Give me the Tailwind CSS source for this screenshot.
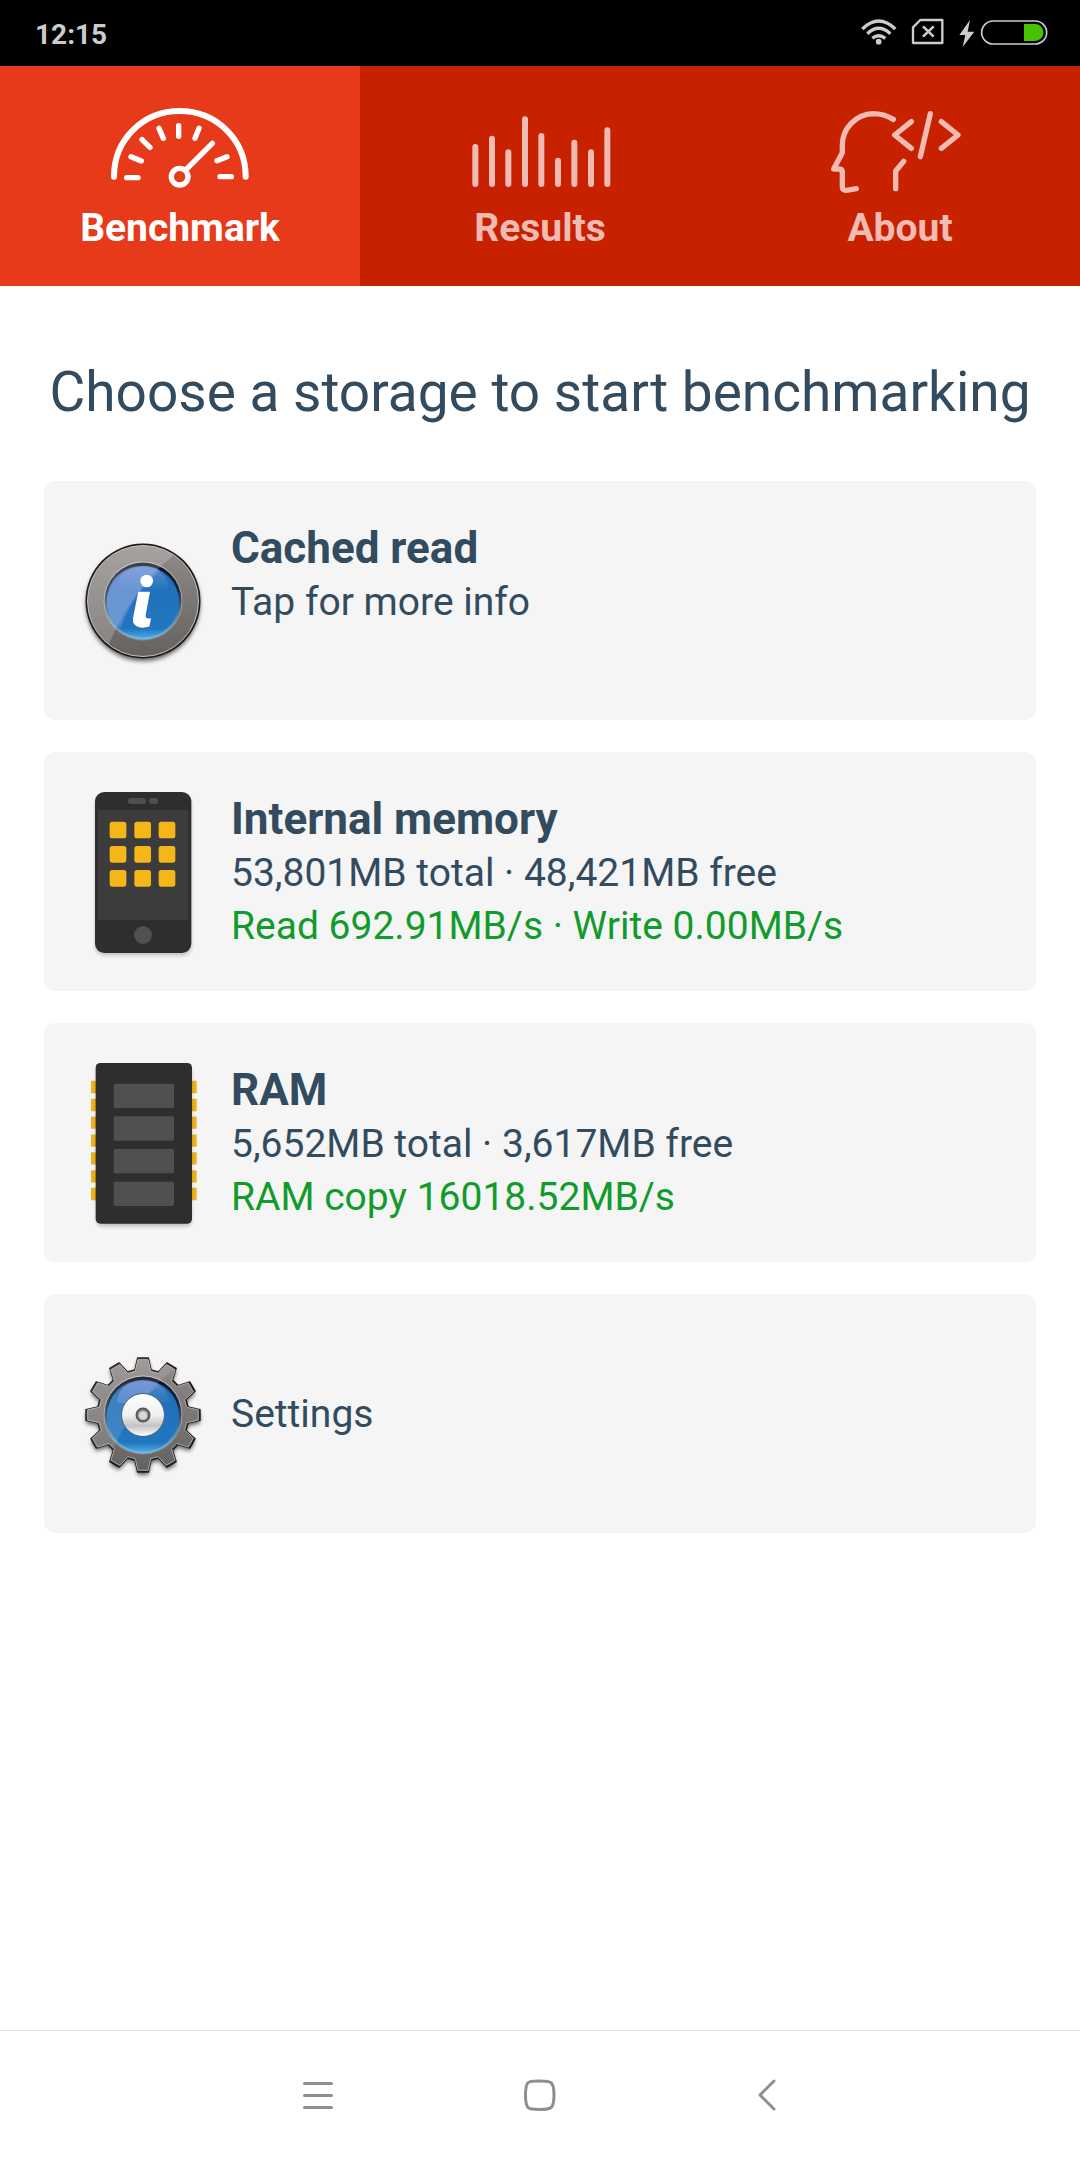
<!DOCTYPE html>
<html lang="en">
<head>
<meta charset="utf-8">
<meta name="viewport" content="width=device-width, initial-scale=1">
<title>Storage benchmark</title>
<script src="https://cdn.jsdelivr.net/npm/@tailwindcss/browser@4"></script>
</head>
<body class="flex min-h-screen flex-col bg-white font-[Roboto,sans-serif] text-[#334b5f]">

<!-- Status bar -->
<div class="flex h-[66px] items-center justify-between bg-black pr-8 pl-[35px]">
  <span class="pt-1 text-[28px] leading-8 font-bold text-[#cccccc]">12:15</span>
  <div class="flex items-center pb-0.5">
    <svg class="mr-[14px] h-8 w-9" viewBox="65 48 108 96" fill="none" stroke="#ccc" stroke-width="10" aria-hidden="true">
      <path d="M69 87Q118 39 168 87M84 101Q118 69 153 101M99 115Q118 99 138 115"/>
      <circle cx="118" cy="125" r="8.500" fill="#ccc" stroke="none"/>
    </svg>
    <svg class="mr-[14px] h-8 w-[33px]" viewBox="214 48 99 96" fill="none" stroke="#ccc" aria-hidden="true">
      <path stroke-width="7" stroke-linejoin="round" d="M242 60H308V129H220V82Z"/>
      <path stroke-width="8" d="M250 79 282 110M282 79 250 110"/>
    </svg>
    <svg class="mr-1 h-8 w-[18px]" viewBox="355 48 54 96" fill="#ccc" aria-hidden="true">
      <path d="M391 60 359 105H377L369 141 404 95H384Z"/>
    </svg>
    <svg class="h-8 w-[68px]" viewBox="421 48 204 96" aria-hidden="true">
      <rect x="426" y="63" width="195" height="69" rx="34.500" fill="none" stroke="#ccc" stroke-width="5"/>
      <path d="M553 72H586A25.500 25.500 0 0 1 586 123H553Z" fill="#46c203"/>
    </svg>
  </div>
</div>

<!-- Tabs -->
<nav class="grid h-[220px] grid-cols-3 bg-[#c82100] text-[39px] leading-[46px] font-bold text-[#f1bab3]">
  <a href="#benchmark" aria-current="page" class="flex flex-col items-center gap-2 bg-[#e73a1a] pt-[35px] text-white">
    <svg class="h-24 w-[150px]" viewBox="135 63 450 288" fill="none" stroke="currentColor" stroke-width="16" stroke-linecap="round" aria-hidden="true">
      <path stroke-width="18" d="M162 290C162 176 252 93 359 93S557 176 557 290"/>
      <path d="M200 293H234M213 230 244 243M246 179 270 202M297 145 310 175M356 137V169M417 145 405 175M501 230 471 242M480 290H514M457 190 378 269"/>
      <circle cx="359" cy="290" r="25"/>
    </svg>
    <span>Benchmark</span>
  </a>
  <a href="#results" class="flex flex-col items-center gap-2 pt-[35px]">
    <svg class="h-24 w-[150px]" viewBox="75 63 450 288" fill="none" stroke="currentColor" stroke-width="18" stroke-linecap="round" aria-hidden="true">
      <path d="M106 201V312M156 176V312M205 217V312M255 118V312M304 168V312M354 242V312M403 188V312M453 217V312M502 151V312"/>
    </svg>
    <span>Results</span>
  </a>
  <a href="#about" class="flex flex-col items-center gap-2 pt-[35px]">
    <svg class="h-24 w-[150px]" viewBox="75 63 450 288" fill="none" stroke="currentColor" stroke-width="16" stroke-linecap="round" stroke-linejoin="round" aria-hidden="true">
      <path d="M280 118C253 102 236 101 220 101C167 103 127 145 127 195V218L101 267H117Q127 267 127 277V320Q127 332 139 331L169 326M311 244 287 273V326"/>
      <path d="M334 125 284 165 334 205M391 101 361 230M424 125 474 165 424 205"/>
    </svg>
    <span>About</span>
  </a>
</nav>

<main class="flex grow flex-col px-11 pt-[74px]">
  <h1 class="text-center text-[55px] leading-[64px] whitespace-nowrap">Choose a storage to start benchmarking</h1>

  <div class="mt-[57px] flex flex-col gap-8 text-[39px] leading-[53px]">
    <!-- Cached read -->
    <button type="button" class="flex h-[239px] items-center gap-2 rounded-[11px] bg-[#f5f5f5] pl-[19px] text-left">
      <svg class="h-[180px] w-[160px] shrink-0" viewBox="-80 -90 160 180" aria-hidden="true">
        <defs>
          <linearGradient id="steel" gradientUnits="userSpaceOnUse" x1="0" y1="-57" x2="0" y2="57">
            <stop offset="0" stop-color="#918c89"/><stop offset="1" stop-color="#65615f"/>
          </linearGradient>
          <linearGradient id="blue" gradientUnits="userSpaceOnUse" x1="0" y1="-37" x2="0" y2="39">
            <stop offset="0" stop-color="#2b68b8"/><stop offset=".3" stop-color="#2070bb"/><stop offset=".85" stop-color="#2276c0"/><stop offset="1" stop-color="#55b5e8"/>
          </linearGradient>
          <linearGradient id="shine" gradientUnits="userSpaceOnUse" x1="0" y1="-36" x2="0" y2="-10">
            <stop offset="0" stop-color="#fff" stop-opacity=".25"/><stop offset="1" stop-color="#fff" stop-opacity="0"/>
          </linearGradient>
          <linearGradient id="rim" gradientUnits="userSpaceOnUse" x1="0" y1="-39" x2="0" y2="39">
            <stop offset="0" stop-color="#080b12"/><stop offset=".35" stop-color="#17283c"/><stop offset=".7" stop-color="#4a87ac"/><stop offset="1" stop-color="#6fc0e8"/>
          </linearGradient>
          <linearGradient id="bevel" gradientUnits="userSpaceOnUse" x1="0" y1="-40" x2="0" y2="40">
            <stop offset="0" stop-color="#c0bdba"/><stop offset="1" stop-color="#8d8784"/>
          </linearGradient>
          <filter id="soft" x="-30%" y="-30%" width="160%" height="160%"><feGaussianBlur stdDeviation="2"/></filter>
          <filter id="softer" x="-30%" y="-30%" width="160%" height="160%"><feGaussianBlur stdDeviation="6"/></filter>
          <clipPath id="disc"><circle r="55"/></clipPath>
        </defs>
        <circle cy="3" r="57" fill="#000" opacity=".6" filter="url(#soft)"/>
        <circle r="57.500" fill="#1c1c1c"/>
        <circle r="55.500" fill="url(#steel)" stroke="#c3c0be" stroke-width="1"/>
        <circle r="39.500" fill="url(#bevel)"/>
        <circle r="38.500" fill="url(#rim)"/>
        <circle cy=".8" r="36" fill="url(#blue)"/>
        <path d="M-26-13C-24-29-12-34 0-34S24-29 26-13Q0-6-26-13Z" fill="url(#shine)"/>
        <path d="M30-45Q-10-14-34 43L-60 60V-60H30Z" fill="#fff" opacity=".2" clip-path="url(#disc)"/>
        <path d="M-36 3C-37-22-20-35 0-35 8-35 13-33 17-30Q-8-10-23 27Q-34 18-36 3Z" fill="#8f9fe0" opacity=".45"/>
        <circle cx="3.700" cy="-20" r="6.300" fill="#fff"/>
        <path d="M-4.700-9.300H7L2.500 15Q2.500 18 8 17.300L6.500 25.500Q2 27 -3 26.500Q-11 25 -10 17Z" fill="#fff"/>
      </svg>
      <span class="flex min-h-[162px] flex-col">
        <strong class="text-[44px] leading-[56px] font-bold">Cached read</strong>
        <span>Tap for more info</span>
      </span>
    </button>

    <!-- Internal memory -->
    <button type="button" class="flex h-[239px] items-center gap-2 rounded-[11px] bg-[#f5f5f5] pl-[19px] text-left">
      <svg class="h-[180px] w-[160px] shrink-0" viewBox="-21 33 480 540" aria-hidden="true">
        <rect x="77" y="76" width="286" height="476" rx="26" fill="#000" opacity=".25" filter="url(#softer)"/>
        <rect x="75" y="63" width="289" height="483" rx="28" fill="#2e2e2e"/>
        <path d="M84 117H355V447H84Z" fill="#3c3c3c"/>
        <rect x="174" y="81" width="54" height="18" rx="8" fill="#4f4f4f"/>
        <rect x="237" y="81" width="27" height="18" rx="8" fill="#4f4f4f"/>
        <circle cx="219" cy="492" r="27" fill="#505050"/>
        <g fill="#f5b619">
          <rect x="119" y="152" width="50" height="50" rx="8"/><rect x="193" y="152" width="50" height="50" rx="8"/><rect x="266" y="152" width="50" height="50" rx="8"/>
          <rect x="119" y="225" width="50" height="50" rx="8"/><rect x="193" y="225" width="50" height="50" rx="8"/><rect x="266" y="225" width="50" height="50" rx="8"/>
          <rect x="119" y="297" width="50" height="50" rx="8"/><rect x="193" y="297" width="50" height="50" rx="8"/><rect x="266" y="297" width="50" height="50" rx="8"/>
        </g>
      </svg>
      <span class="flex min-h-[162px] flex-col">
        <strong class="text-[44px] leading-[56px] font-bold">Internal memory</strong>
        <span>53,801MB total · 48,421MB free</span>
        <span class="text-[#119b2b]">Read 692.91MB/s · Write 0.00MB/s</span>
      </span>
    </button>

    <!-- RAM -->
    <button type="button" class="flex h-[239px] items-center gap-2 rounded-[11px] bg-[#f5f5f5] pl-[19px] text-left">
      <svg class="h-[180px] w-[160px] shrink-0" viewBox="-21 36 480 540" aria-hidden="true">
        <path d="M63 138H380M63 192H380M63 245H380M63 299H380M63 352H380M63 406H380M63 459H380" stroke="#f0b21c" stroke-width="37"/>
        <rect x="80" y="80" width="284" height="475" rx="14" fill="#000" opacity=".25" filter="url(#softer)"/>
        <rect x="77" y="66" width="289" height="482" rx="14" fill="#2e2e2e"/>
        <g fill="#505050">
          <rect x="131" y="128" width="181" height="73" rx="5"/><rect x="131" y="226" width="181" height="73" rx="5"/>
          <rect x="131" y="324" width="181" height="73" rx="5"/><rect x="131" y="422" width="181" height="73" rx="5"/>
        </g>
      </svg>
      <span class="flex min-h-[162px] flex-col">
        <strong class="text-[44px] leading-[56px] font-bold">RAM</strong>
        <span>5,652MB total · 3,617MB free</span>
        <span class="text-[#119b2b]">RAM copy 16018.52MB/s</span>
      </span>
    </button>

    <!-- Settings -->
    <button type="button" class="flex h-[239px] items-center gap-2 rounded-[11px] bg-[#f5f5f5] pt-0.5 pl-[19px] text-left">
      <svg class="h-[180px] w-[160px] shrink-0" viewBox="-80 -90 160 180" aria-hidden="true">
        <defs>
          <path id="cog" d="M-8-45-5.300-57H5.300L8-45 15.600-43 23.900-52 33.100-46.700 29.400-35 35-29.400 46.700-33.100 52-23.900 43-15.600 45-8 57-5.300V5.300L45 8 43 15.600 52 23.900 46.700 33.100 35 29.400 29.400 35 33.100 46.700 23.900 52 15.600 43 8 45 5.300 57H-5.300L-8 45-15.600 43-23.900 52-33.100 46.700-29.400 35-35 29.400-46.700 33.100-52 23.900-43 15.600-45 8-57 5.300V-5.300L-45-8-43-15.600-52-23.900-46.700-33.100-35-29.400-29.400-35-33.100-46.700-23.900-52-15.600-43Z"/>
          <clipPath id="cogclip"><use href="#cog"/></clipPath>
          <linearGradient id="silver" x1="0" y1="0" x2="0" y2="1">
            <stop offset="0" stop-color="#fff"/><stop offset=".5" stop-color="#f0f0f0"/><stop offset=".75" stop-color="#c4c4c4"/><stop offset="1" stop-color="#fff"/>
          </linearGradient>
        </defs>
        <use href="#cog" y="3" fill="#000" opacity=".6" filter="url(#soft)"/>
        <use href="#cog" fill="#1c1c1c" stroke="#1c1c1c" stroke-width="1.500" stroke-linejoin="round"/>
        <use href="#cog" transform="scale(.97)" fill="url(#steel)" stroke="#b0adab" stroke-width="1"/>
        <circle r="39.500" fill="url(#bevel)"/>
        <circle r="38.500" fill="url(#rim)"/>
        <circle cy=".8" r="36" fill="url(#blue)"/>
        <path d="M-26-13C-24-29-12-34 0-34S24-29 26-13Q0-6-26-13Z" fill="url(#shine)"/>
        <path d="M30-45Q-10-14-34 43L-60 60V-60H30Z" fill="#fff" opacity=".12" clip-path="url(#cogclip)"/>
        <path d="M-26-13C-24-29-12-34 0-34 8-34 13-32 17-30Q5-22-5-11Q-15-10-26-13Z" fill="#7f96d8" opacity=".5"/>
        <circle r="21.500" fill="url(#silver)" stroke="#44617a" stroke-width="1"/>
        <circle r="6.500" fill="#9a9a9a" stroke="#555" stroke-width="2"/>
        <circle cy=".5" r="4" fill="#d8d8d8"/>
      </svg>
      <span>Settings</span>
    </button>
  </div>
</main>

<!-- System navigation -->
<footer class="flex h-[130px] items-center justify-center border-t border-[#e4e4e4] pb-0.5 text-[#8e8e8e]">
  <button type="button" aria-label="Recent apps" class="flex h-full w-[222px] items-center justify-center">
    <svg class="size-10" viewBox="0 0 40 40" fill="none" stroke="currentColor" stroke-width="3" stroke-linecap="round"><path d="M6.500 8.500H33.500M6.500 20.500H33.500M6.500 32.500H33.500"/></svg>
  </button>
  <button type="button" aria-label="Home" class="flex h-full w-[222px] items-center justify-center">
    <svg class="size-10" viewBox="0 0 40 40" fill="none" stroke="currentColor" stroke-width="3"><path d="M19.500 6C31 6 34 6 34 20S31 34.500 19.500 34.500 5.500 34.500 5.500 20 8 6 19.500 6Z"/></svg>
  </button>
  <button type="button" aria-label="Back" class="flex h-full w-[222px] items-center justify-center">
    <svg class="size-10" viewBox="0 0 40 40" fill="none" stroke="currentColor" stroke-width="3" stroke-linecap="round" stroke-linejoin="round"><path d="M32 6 18 20 32 34"/></svg>
  </button>
</footer>
</body>
</html>
